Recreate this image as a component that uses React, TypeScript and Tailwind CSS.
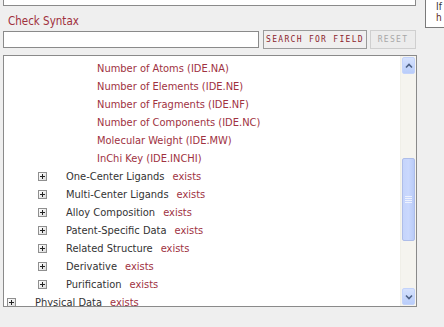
import React from "react";

const font = { fontFamily: '"DejaVu Sans Condensed", "DejaVu Sans", sans-serif' };

function Plus() {
  return (
    <span className="inline-flex w-[9px] h-[9px] border border-[#8f8f8f] bg-gradient-to-br from-white to-[#dcdcdc] items-center justify-center shrink-0">
      <svg width="7" height="7" viewBox="0 0 7 7">
        <path d="M1 3.5H6M3.5 1V6" stroke="#222" strokeWidth="1" />
      </svg>
    </span>
  );
}

const leaves = [
  "Number of Atoms (IDE.NA)",
  "Number of Elements (IDE.NE)",
  "Number of Fragments (IDE.NF)",
  "Number of Components (IDE.NC)",
  "Molecular Weight (IDE.MW)",
  "InChi Key (IDE.INCHI)",
];

const nodes = [
  "One-Center Ligands",
  "Multi-Center Ligands",
  "Alloy Composition",
  "Patent-Specific Data",
  "Related Structure",
  "Derivative",
  "Purification",
];

function Node({ label, level }: { label: string; level: number }) {
  return (
    <div className={`flex items-center h-[18px] ${level === 0 ? "pl-[3px]" : "pl-[34px]"}`}>
      <Plus />
      <span className="ml-[19px] text-[#333]">{label}</span>
      <span className="ml-[8px] text-[#a0323f]">exists</span>
    </div>
  );
}

export default function App() {
  return (
    <div
      className="w-[444px] h-[327px] bg-[#efefef] overflow-hidden flex text-[11px] leading-none"
      style={font}
    >
      <div className="w-[417px] shrink-0 pl-[3px] flex flex-col">
        <div className="h-[6px] w-[413px] bg-white border border-t-0 border-[#8a8a8a]" />
        <div className="h-[28px] flex items-center pl-[5px] pt-[3px] text-[11.5px] text-[#a0303c]">
          Check Syntax
        </div>
        <div className="flex items-center h-[19px] -mt-[4px]">
          <div className="w-[256px] h-[17px] bg-white border border-[#8a8a8a]" />
          <button
            className="ml-[4px] w-[104px] h-[19px] border border-[#9a9a9a] bg-[#f0efef] text-[8px] tracking-[1.3px] text-[#8c1f2e] flex items-center justify-center"
            style={{ fontFamily: '"DejaVu Sans Mono", monospace' }}
          >
            SEARCH FOR FIELD
          </button>
          <button
            className="ml-[3px] w-[46px] h-[19px] border border-[#cfcfcf] bg-[#ececec] text-[8px] tracking-[1.3px] text-[#a8a8a8] flex items-center justify-center"
            style={{ fontFamily: '"DejaVu Sans Mono", monospace' }}
          >
            RESET
          </button>
        </div>
        <div className="mt-[6px] w-[414px] h-[252px] bg-white border border-[#8a8a8a] flex">
          <div className="flex-1 pt-[3px] overflow-hidden">
            {leaves.map((l) => (
              <div key={l} className="h-[18px] flex items-center pl-[93px] text-[#a0323f]">
                {l}
              </div>
            ))}
            {nodes.map((n) => (
              <Node key={n} label={n} level={1} />
            ))}
            <Node label="Physical Data" level={0} />
          </div>
          <div className="w-[16px] bg-[#f5f4ef] flex flex-col border-l border-[#f0efe8]">
            <div className="h-[17px] mx-[1px] mt-[1px] rounded-[2px] bg-gradient-to-b from-[#d6e2fd] to-[#b9cdfa] border border-[#c3d3fb] flex items-center justify-center">
              <svg width="8" height="6" viewBox="0 0 8 6">
                <path d="M1 4.5L4 1.5L7 4.5" stroke="#4d6185" strokeWidth="1.6" fill="none" />
              </svg>
            </div>
            <div className="h-[84px]" />
            <div className="h-[83px] mx-[1px] rounded-[2px] bg-gradient-to-r from-[#c5d4fb] via-[#cad8fd] to-[#b9cbf7] border border-[#aebde9] flex items-center justify-center">
              <div className="flex flex-col gap-[1px]">
                <div className="w-[7px] h-[1px] bg-[#eef2fe]" />
                <div className="w-[7px] h-[1px] bg-[#eef2fe]" />
                <div className="w-[7px] h-[1px] bg-[#eef2fe]" />
                <div className="w-[7px] h-[1px] bg-[#eef2fe]" />
              </div>
            </div>
            <div className="flex-1" />
            <div className="h-[17px] mx-[1px] mb-[1px] rounded-[2px] bg-gradient-to-b from-[#d6e2fd] to-[#b9cdfa] border border-[#c3d3fb] flex items-center justify-center">
              <svg width="8" height="6" viewBox="0 0 8 6">
                <path d="M1 1.5L4 4.5L7 1.5" stroke="#4d6185" strokeWidth="1.6" fill="none" />
              </svg>
            </div>
          </div>
        </div>
      </div>
      <div className="ml-[8px] w-[40px] h-[28px] shrink-0 bg-white border border-t-0 border-[#7a7a7a] pl-[10px] text-[10px] leading-[11px] pt-[1px]">
        <div className="text-[#333]">If</div>
        <div className="text-[#5a1f1f]">h</div>
      </div>
    </div>
  );
}
